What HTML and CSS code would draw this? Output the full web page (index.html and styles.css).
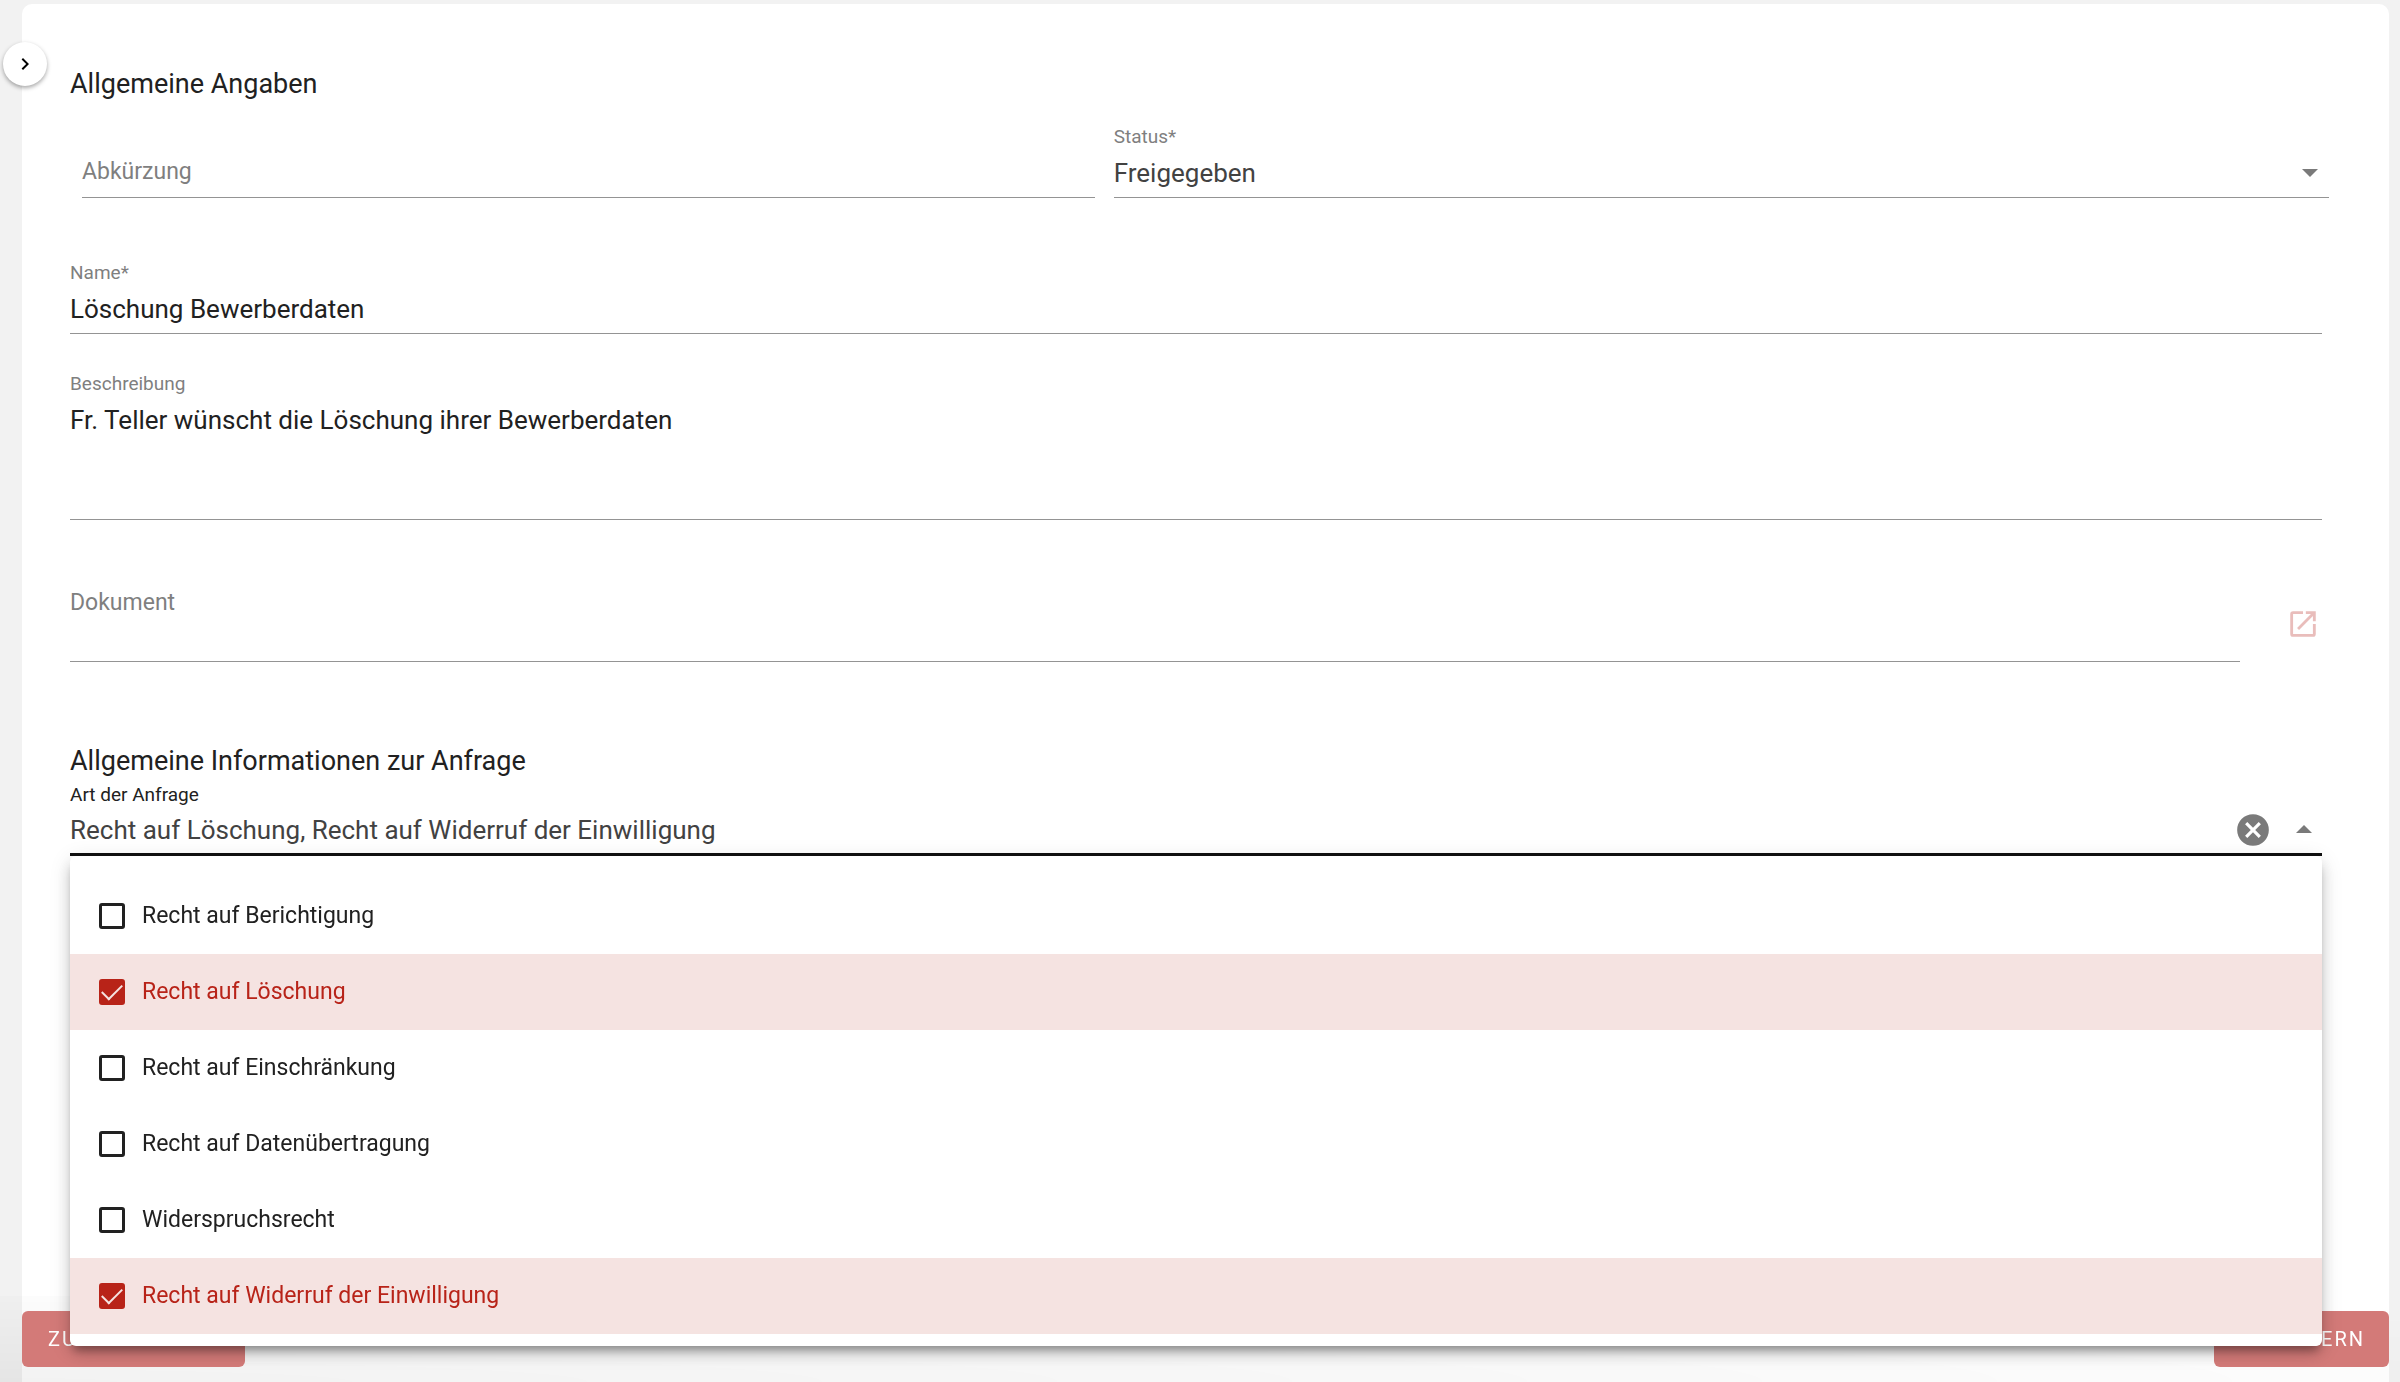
FILE: index.html
```html
<!DOCTYPE html>
<html lang="de">
<head>
    <meta charset="UTF-8">
    <meta name="viewport" content="width=device-width, initial-scale=1.0">
    <title>Anfrage bearbeiten</title>
    <link rel="stylesheet" href="styles.css">
</head>
<body>

    <button type="button" class="drawer-toggle" aria-label="Navigation öffnen">
        <svg viewBox="0 0 24 24"><path d="M8.6 16.6 13.2 12 8.6 7.4 10 6l6 6-6 6z"/></svg>
    </button>

    <form class="card" id="request-form">
        <h2>Allgemeine Angaben</h2>

        <div class="row">
            <div class="field empty">
                <label for="short">Abkürzung</label>
                <input type="text" id="short">
            </div>
            <div class="field">
                <label for="status">Status*</label>
                <div class="control">
                    <select id="status">
                        <option>Freigegeben</option>
                    </select>
                    <span class="caret"></span>
                </div>
            </div>
        </div>

        <div class="field name">
            <label for="name">Name*</label>
            <input type="text" id="name" value="Löschung Bewerberdaten">
        </div>

        <div class="field description">
            <label for="description">Beschreibung</label>
            <textarea id="description">Fr. Teller wünscht die Löschung ihrer Bewerberdaten</textarea>
        </div>

        <div class="document">
            <div class="field empty">
                <label for="document">Dokument</label>
                <input type="text" id="document">
            </div>
            <button type="button" class="open-link" aria-label="Dokument öffnen">
                <svg viewBox="0 0 24 24"><path d="M12 3H5a2 2 0 0 0-2 2v14a2 2 0 0 0 2 2h14a2 2 0 0 0 2-2v-7h-2v7H5V5h7V3zM14 3v2h3.600l-9.800 9.800 1.400 1.400L19 6.400V10h2V3z"/></svg>
            </button>
        </div>

        <h2 class="second">Allgemeine Informationen zur Anfrage</h2>

        <div class="field active">
            <label for="kind">Art der Anfrage</label>
            <div class="control">
                <select id="kind">
                    <option>Recht auf Löschung, Recht auf Widerruf der Einwilligung</option>
                </select>
                <button type="button" class="clear" aria-label="Auswahl löschen">
                    <svg viewBox="0 0 24 24"><path d="M12 2a10 10 0 1 0 0 20 10 10 0 0 0 0-20zm5 13.600L15.600 17 12 13.400 8.400 17 7 15.600 10.600 12 7 8.400 8.400 7 12 10.600 15.600 7 17 8.400 13.400 12z"/></svg>
                </button>
                <span class="caret up"></span>
            </div>

            <div class="menu">
                <label class="option"><input type="checkbox"> Recht auf Berichtigung</label>
                <label class="option selected"><input type="checkbox" checked> Recht auf Löschung</label>
                <label class="option"><input type="checkbox"> Recht auf Einschränkung</label>
                <label class="option"><input type="checkbox"> Recht auf Datenübertragung</label>
                <label class="option"><input type="checkbox"> Widerspruchsrecht</label>
                <label class="option selected"><input type="checkbox" checked> Recht auf Widerruf der Einwilligung</label>
            </div>
        </div>
    </form>

    <footer class="actions">
        <button type="reset" form="request-form">ZURÜCKSETZEN</button>
        <button type="submit" form="request-form">SPEICHERN</button>
    </footer>

</body>
</html>
```

FILE: styles.css
```css
* {
    box-sizing: border-box;
}
body {
    margin: 0;
    height: 100vh;
    padding: 4px 11px 0 22px;
    overflow: hidden;
    background-color: #f2f2f2;
    color: #212121;
    font-family: Roboto, Arial, sans-serif;
    font-size: 26px;
}
button, input, select, textarea {
    font: inherit;
    color: inherit;
    border: 0;
    padding: 0;
    margin: 0;
    background: none;
    border-radius: 0;
    outline: none;
}
svg {
    display: block;
    fill: currentColor;
}
.card {
    min-height: 100%;
    padding: 62px 67px 0 48px;
    background-color: #fff;
    border-radius: 10px 10px 0 0;
}
h2 {
    margin: 0 0 23px;
    font-size: 27px;
    line-height: 36px;
    font-weight: 400;
}
h2.second {
    margin: 81px 0 4px;
}

/* Round button that opens the side navigation */
.drawer-toggle {
    position: absolute;
    top: 42px;
    left: 3px;
    width: 44px;
    height: 44px;
    padding: 10px;
    border-radius: 50%;
    background-color: #fff;
    color: #000;
    box-shadow: 0 2px 4px rgba(0,0,0,0.35);
}

/* Form fields */
.row {
    display: grid;
    grid-template-columns: 5fr 6fr;
    align-items: end;
    gap: 19px;
    margin: 0 -7px 0 12px;
}
.field label {
    display: block;
    font-size: 19px;
    line-height: 24px;
    color: #7f7f7f;
}
.field input[type="text"], .field select, .field textarea {
    display: block;
    width: 100%;
    height: 49px;
    border-bottom: 1px solid #949494;
    appearance: none;
}
.field select {
    color: #424242;
}
.field textarea {
    height: 124px;
    padding-top: 8px;
    line-height: 32px;
    resize: none;
}
.name {
    margin-top: 63px;
}
.description {
    margin-top: 38px;
}
.control {
    position: relative;
}
.caret {
    position: absolute;
    top: 20px;
    right: 11px;
    border: 8px solid transparent;
    border-top-color: #7a7a7a;
    border-bottom: 0;
}
.caret.up {
    top: 18px;
    right: 10px;
    border-top: 0;
    border-bottom: 8px solid #7a7a7a;
}

/* The label sits where the value would be */
.field.empty {
    display: grid;
}
.field.empty label, .field.empty input {
    grid-area: 1 / 1;
}
.field.empty label {
    font-size: 23px;
    line-height: 46px;
}

.document {
    display: flex;
    gap: 44px;
    margin-top: 60px;
}
.document .field {
    flex: 1;
}
.document .field input[type="text"] {
    height: 82px;
}
.open-link {
    width: 38px;
    padding: 6px 2px 0;
    color: #e9bdbb;
}

/* Open selection */
.field.active {
    position: relative;
}
.field.active label {
    color: #212121;
}
.field.active select {
    border-bottom: 3px solid #111;
}
.clear {
    position: absolute;
    top: 4px;
    right: 50px;
    width: 38px;
    color: #7a7a7a;
}
.menu {
    position: absolute;
    z-index: 2;
    top: 100%;
    left: 0;
    right: 0;
    padding: 22px 0 12px;
    background-color: #fff;
    border-radius: 6px;
    box-shadow: 0 8px 8px -4px rgba(0,0,0,0.3), 0 8px 16px rgba(0,0,0,0.14), 0 4px 22px rgba(0,0,0,0.12);
}
.menu .option {
    display: flex;
    align-items: center;
    gap: 17px;
    height: 76px;
    padding-left: 29px;
    font-size: 23px;
}
.menu .option.selected {
    background-color: #f5e3e1;
    color: #b82318;
}
.option input {
    appearance: none;
    width: 26px;
    height: 26px;
    border: 3px solid currentColor;
    border-radius: 3px;
}
.option input:checked {
    display: grid;
    place-items: center;
    background-color: #b82318;
}
.option input:checked::before {
    content: "";
    width: 18px;
    height: 9px;
    margin-bottom: 5px;
    border-left: 2px solid #f5e3e1;
    border-bottom: 2px solid #f5e3e1;
    transform: rotate(-45deg);
}

/* Buttons at the bottom edge */
.actions {
    position: fixed;
    z-index: 1;
    left: 0;
    right: 0;
    bottom: 0;
    display: flex;
    justify-content: space-between;
    padding: 15px 11px 15px 22px;
    background: radial-gradient(ellipse at bottom left, rgba(0,0,0,0.05), transparent 90%);
}
.actions button {
    height: 56px;
    padding: 0 24px 0 26px;
    border-radius: 6px;
    background-color: #d37a78;
    color: #fff;
    font-size: 20px;
    letter-spacing: 2px;
}
```
